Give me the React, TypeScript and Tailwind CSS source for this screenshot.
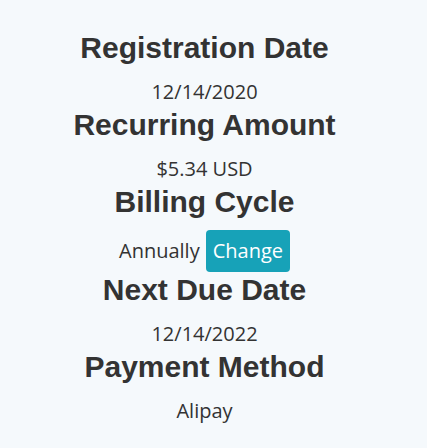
const rows: { label: string; value: string; change?: boolean }[] = [
  { label: "Registration Date", value: "12/14/2020" },
  { label: "Recurring Amount", value: "$5.34 USD" },
  { label: "Billing Cycle", value: "Annually", change: true },
  { label: "Next Due Date", value: "12/14/2022" },
  { label: "Payment Method", value: "Alipay" },
];

export default function App() {
  return (
    <div className="min-h-[448px] bg-[#f5f9fc] pt-[30px] text-[#333]">
      <div className="w-[409px] text-center">
        {rows.map((r) => (
          <div key={r.label}>
            <h3 className="mb-[10px] font-['Liberation_Sans',Arial,sans-serif] text-[30px] font-bold leading-[36px]">
              {r.label}
            </h3>
            <p className="font-['Open_Sans',sans-serif] text-[20px] leading-[31px]">
              {r.value}
              {r.change ? (
                <button className="ml-[6px] rounded-[4px] bg-[#17a2b8] px-[7px] py-[6px] text-[20px] leading-[30px] text-white">
                  Change
                </button>
              ) : null}
            </p>
          </div>
        ))}
      </div>
    </div>
  );
}
